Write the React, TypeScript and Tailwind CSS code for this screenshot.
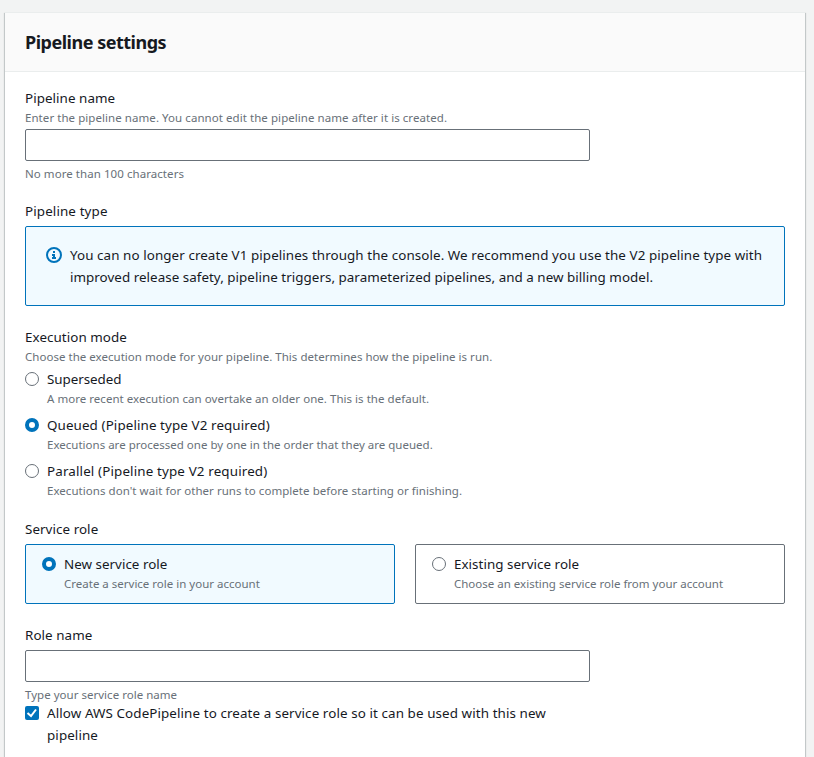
import React from 'react';

const Label = ({ children, className = 'tracking-[0.06px]' }: { children: React.ReactNode; className?: string }) => (
  <div className={'text-[13.4px] leading-[22px] font-[450] whitespace-nowrap text-[#16191f] ' + className}>{children}</div>
);
const Hint = ({ children, className = 'tracking-[0.06px]' }: { children: React.ReactNode; className?: string }) => (
  <div className={'text-[11.5px] leading-[18px] whitespace-nowrap text-[#687078] ' + className}>{children}</div>
);

function Radio({ checked }: { checked?: boolean }) {
  return (
    <span
      className={
        'mt-1 h-[14px] w-[14px] shrink-0 rounded-full bg-white ' +
        (checked ? 'border-4 border-[#0073bb]' : 'border border-[#687078]')
      }
    />
  );
}

type OptionProps = { title: string; text: string; checked?: boolean; titleClass?: string; textClass?: string };

function Option({ title, text, checked, titleClass, textClass }: OptionProps) {
  return (
    <div className="flex gap-2">
      <Radio checked={checked} />
      <div>
        <Label className={titleClass}>{title}</Label>
        <Hint className={textClass}>{text}</Hint>
      </div>
    </div>
  );
}

export default function App() {
  return (
    <div className="h-[757px] overflow-hidden bg-[#f2f3f3] pt-3 pl-[5px] font-['Noto_Sans',sans-serif]">
      <div className="h-[760px] w-[800px] border-t border-[#eaeded] bg-white shadow-[0_1px_1px_0_rgba(0,28,36,0.3),1px_1px_1px_0_rgba(0,28,36,0.15),-1px_1px_1px_0_rgba(0,28,36,0.15)]">
        <div className="h-[59px] border-b border-[#eaeded] bg-[#fafafa] px-5 pt-[18px]">
          <h2 className="text-[18px] leading-[22px] font-bold tracking-[-0.49px] text-[#16191f]">Pipeline settings</h2>
        </div>
        <div className="px-5 pt-[15px]">
          <Label>Pipeline name</Label>
          <Hint>Enter the pipeline name. You cannot edit the pipeline name after it is created.</Hint>
          <input className="mt-[2px] mb-1 block h-8 w-[565px] rounded-[2px] border border-[#687078] bg-white" />
          <Hint>No more than 100 characters</Hint>
          <div className="mt-[17px]">
            <Label className="tracking-[0.12px]">Pipeline type</Label>
          </div>
          <div className="mt-1 flex h-[80px] w-[760px] gap-2 rounded-[2px] border border-[#0073bb] bg-[#f1faff] px-5 pt-[17px]">
            <svg className="mt-[3px] h-4 w-4 shrink-0" viewBox="0 0 16 16" fill="none" stroke="#0073bb" strokeWidth="2">
              <circle cx="8" cy="8" r="7" />
              <path d="M8 11V8H6M10 11H6M8 6V4" />
            </svg>
            <div>
              <Label className="tracking-[0.08px]">
                You can no longer create V1 pipelines through the console. We recommend you use the V2 pipeline type with
              </Label>
              <Label className="tracking-[0.035px]">
                improved release safety, pipeline triggers, parameterized pipelines, and a new billing model.
              </Label>
            </div>
          </div>
          <div className="mt-5">
            <Label>Execution mode</Label>
            <Hint className="tracking-[0.025px]">
              Choose the execution mode for your pipeline. This determines how the pipeline is run.
            </Hint>
          </div>
          <div className="mt-[2px] flex flex-col gap-[6px]">
            <Option
              title="Superseded"
              titleClass="tracking-[-0.05px]"
              text="A more recent execution can overtake an older one. This is the default."
              textClass="tracking-[0.035px]"
            />
            <Option
              checked
              title="Queued (Pipeline type V2 required)"
              titleClass="tracking-[0.1px]"
              text="Executions are processed one by one in the order that they are queued."
              textClass="tracking-[0.01px]"
            />
            <Option
              title="Parallel (Pipeline type V2 required)"
              titleClass="tracking-[0.14px]"
              text="Executions don't wait for other runs to complete before starting or finishing."
              textClass="tracking-[0.045px]"
            />
          </div>
          <div className="mt-[18px]">
            <Label>Service role</Label>
          </div>
          <div className="mt-1 flex w-[760px] gap-5">
            <div className="h-[60px] w-[370px] rounded-[2px] border border-[#0073bb] bg-[#f1faff] px-4 pt-[8px]">
              <Option
                checked
                title="New service role"
                titleClass="tracking-[0.02px]"
                text="Create a service role in your account"
                textClass="tracking-normal"
              />
            </div>
            <div className="h-[60px] w-[370px] rounded-[2px] border border-[#687078] bg-white px-4 pt-[8px]">
              <Option
                title="Existing service role"
                titleClass="tracking-[0.04px]"
                text="Choose an existing service role from your account"
                textClass="tracking-normal"
              />
            </div>
          </div>
          <div className="mt-5">
            <Label>Role name</Label>
          </div>
          <input className="mt-1 mb-1 block h-8 w-[565px] rounded-[2px] border border-[#687078] bg-white" />
          <Hint className="tracking-[0.02px]">Type your service role name</Hint>
          <div className="-mt-[2px] flex gap-2">
            <span className="mt-1 flex h-[14px] w-[14px] shrink-0 rounded-[2px] bg-[#0073bb]">
              <svg className="h-[14px] w-[14px]" viewBox="0 0 14 14" fill="none" stroke="#fff" strokeWidth="2">
                <path d="M2.5 7L6 10L11 3.5" />
              </svg>
            </span>
            <Label className="tracking-[0.095px]">
              Allow AWS CodePipeline to create a service role so it can be used with this new
              <br />
              pipeline
            </Label>
          </div>
        </div>
      </div>
    </div>
  );
}
